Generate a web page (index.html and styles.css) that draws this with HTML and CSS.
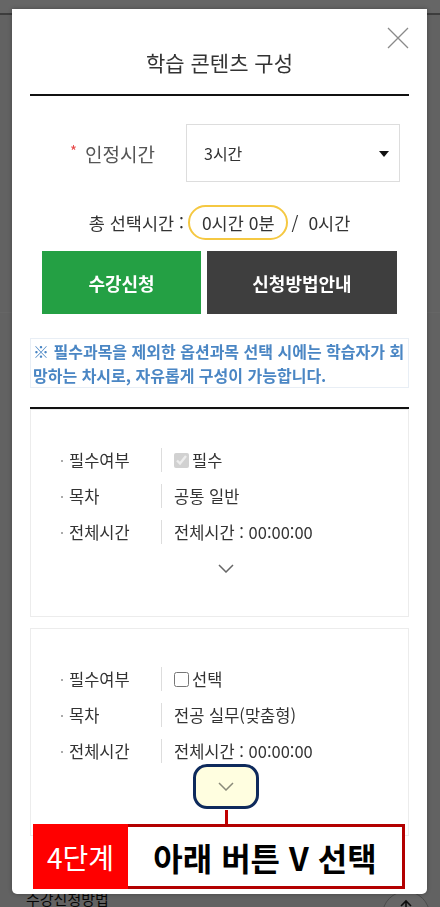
FILE: index.html
```html
<!DOCTYPE html>
<html lang="ko">
<head>
    <meta charset="UTF-8">
    <meta name="viewport" content="width=device-width, initial-scale=1.0">
    <title>학습 콘텐츠 구성</title>
    <link rel="stylesheet" href="styles.css">
</head>
<body>
    <div class="page">
        <div class="page-top"></div>
        <div class="page-section"></div>
        <div class="page-section last">
            <p class="page-text">수강신청방법</p>
        </div>
        <button class="to-top" type="button" aria-label="맨 위로">
            <svg viewBox="0 0 14 14" width="14" height="14"><path d="M7 13 V2 M2 7 L7 2 L12 7" stroke="#222" stroke-width="1.6" fill="none"/></svg>
        </button>
    </div>

    <div class="dim"></div>

    <div class="modal">
        <button class="close-btn" type="button" aria-label="닫기">
            <svg viewBox="0 0 22 22" width="22" height="22">
                <path d="M1 1 L21 21 M21 1 L1 21" stroke="#8a8a8a" stroke-width="1.3" fill="none"/>
            </svg>
        </button>

        <div class="modal-header">
            <h2>학습 콘텐츠 구성</h2>
        </div>

        <div class="form-row">
            <label class="form-label"><span class="req">*</span>인정시간</label>
            <div class="select">3시간</div>
        </div>

        <div class="summary">
            <span>총 선택시간 :</span>
            <span class="pill">0시간 0분</span>
            <span class="slash">/</span>
            <span>0시간</span>
        </div>

        <div class="btn-row">
            <button class="btn btn-green" type="button">수강신청</button>
            <button class="btn btn-dark" type="button">신청방법안내</button>
        </div>

        <div class="notice">
            ※ 필수과목을 제외한 옵션과목 선택 시에는 학습자가 회망하는 차시로, 자유롭게 구성이 가능합니다.
        </div>

        <div class="course-list">
            <div class="course-card">
                <div class="info-row">
                    <div class="info-label">필수여부</div>
                    <div class="info-value"><input type="checkbox" checked disabled> 필수</div>
                </div>
                <div class="info-row">
                    <div class="info-label">목차</div>
                    <div class="info-value">공통 일반</div>
                </div>
                <div class="info-row">
                    <div class="info-label">전체시간</div>
                    <div class="info-value">전체시간 : 00:00:00</div>
                </div>
                <div class="toggle-row">
                    <button class="toggle" type="button">
                        <svg viewBox="0 0 16 9" width="16" height="9"><path d="M1 1 L8 8 L15 1" stroke="#666" stroke-width="1.5" fill="none"/></svg>
                    </button>
                </div>
            </div>

            <div class="course-card">
                <div class="info-row">
                    <div class="info-label">필수여부</div>
                    <div class="info-value"><input type="checkbox"> 선택</div>
                </div>
                <div class="info-row">
                    <div class="info-label">목차</div>
                    <div class="info-value">전공 실무(맞춤형)</div>
                </div>
                <div class="info-row">
                    <div class="info-label">전체시간</div>
                    <div class="info-value">전체시간 : 00:00:00</div>
                </div>
                <div class="toggle-row">
                    <button class="toggle highlight" type="button">
                        <svg viewBox="0 0 16 9" width="16" height="9"><path d="M1 1 L8 8 L15 1" stroke="#8a8a7a" stroke-width="1.5" fill="none"/></svg>
                    </button>
                </div>
            </div>
        </div>

        <div class="guide-line"></div>
        <div class="guide">
            <div class="guide-step">4단계</div>
            <div class="guide-text">아래 버튼 V 선택</div>
        </div>
    </div>
</body>
</html>
```

FILE: styles.css
```css
* {
    margin: 0;
    padding: 0;
    box-sizing: border-box;
}

body {
    font-family: 'Noto Sans CJK KR', 'Noto Sans', sans-serif;
    color: #333;
    height: 907px;
    overflow: hidden;
}

button {
    font-family: inherit;
    border: none;
    background: none;
    cursor: pointer;
}

/* background page */
.page {
    height: 907px;
    display: flex;
    flex-direction: column;
    background: #f4f4f4;
}

.page-top {
    height: 15px;
    background: #fff;
    border-bottom: 2px solid #999;
}

.page-section {
    height: 298px;
    border-bottom: 1px solid #fff;
}

.page-section.last {
    flex: 1;
    border-bottom: none;
    display: flex;
    align-items: flex-end;
}

.page-text {
    padding-left: 26px;
    font-size: 15px;
    line-height: 15px;
    margin-bottom: 1px;
    color: #111;
}

.to-top {
    position: absolute;
    right: 10px;
    bottom: -32px;
    width: 48px;
    height: 48px;
    border-radius: 50%;
    border: 1px solid #bbb;
    background: #fff;
    display: flex;
    justify-content: center;
    padding-top: 7px;
}

.dim {
    position: fixed;
    inset: 0;
    background: rgba(0, 0, 0, 0.6);
}

/* modal */
.modal {
    position: fixed;
    top: 9px;
    left: 12px;
    width: 415px;
    height: 885px;
    background: #fff;
    border-radius: 0 0 5px 5px;
    padding: 0 18px;
    overflow: hidden;
    box-shadow: 0 0 4px rgba(0,0,0,0.3);
}

.close-btn {
    position: absolute;
    top: 18px;
    right: 18px;
    width: 22px;
    height: 22px;
    display: flex;
}

.modal-header {
    padding: 40px 0 19px;
    border-bottom: 2px solid #111;
    text-align: center;
}

.modal-header h2 {
    font-size: 21px;
    line-height: 26px;
    font-weight: 400;
    color: #333;
}

.form-row {
    margin-top: 28px;
    height: 58px;
    display: flex;
    align-items: center;
    padding: 0 9px 0 40px;
}

.form-label {
    font-size: 19px;
    color: #555;
    display: flex;
    align-items: center;
}

.req {
    color: #e84a4a;
    font-size: 15px;
    margin-right: 8px;
    position: relative;
    top: -3px;
}

.select {
    margin-left: auto;
    width: 214px;
    height: 58px;
    border: 1px solid #ddd;
    padding-left: 17px;
    font-size: 16px;
    display: flex;
    align-items: center;
    position: relative;
}

.select::after {
    content: '';
    position: absolute;
    right: 10px;
    top: 26px;
    border-left: 5.5px solid transparent;
    border-right: 5.5px solid transparent;
    border-top: 6px solid #111;
}

.summary {
    margin-top: 23px;
    display: flex;
    justify-content: center;
    align-items: center;
    font-size: 17.5px;
    color: #333;
    gap: 4px;
}

.pill {
    height: 35px;
    padding: 0 11px 0 12px;
    border: 2px solid #f5c842;
    border-radius: 18px;
    display: flex;
    align-items: center;
}

.slash {
    margin-right: 6px;
}

.btn-row {
    margin-top: 11px;
    padding: 0 12px;
    display: grid;
    grid-template-columns: 159fr 190fr;
    gap: 6px;
}

.btn {
    height: 63px;
    font-size: 18px;
    font-weight: 700;
    color: #fff;
}

.btn-green {
    background: #24a044;
}

.btn-dark {
    background: #3e3e3e;
}

.notice {
    margin-top: 24px;
    border: 1px solid #e8eef5;
    padding: 0 2px;
    font-size: 16px;
    line-height: 24px;
    font-weight: 700;
    color: #4a86c4;
}

.course-list {
    margin-top: 19px;
    border-top: 2px solid #111;
}

.course-card {
    border: 1px solid #ececec;
    padding: 32px 30px 30px;
}

.course-card + .course-card {
    margin-top: 11px;
}

.info-row {
    height: 36px;
    display: flex;
    align-items: center;
    font-size: 16.5px;
    color: #333;
}

.info-label {
    width: 101px;
    height: 24px;
    display: flex;
    align-items: center;
    padding-left: 8px;
    position: relative;
    border-right: 1px solid #ddd;
}

.info-label::before {
    content: '';
    position: absolute;
    left: 0;
    top: 12px;
    width: 2px;
    height: 2px;
    background: #aaa;
}

.info-value {
    padding-left: 12px;
    display: flex;
    align-items: center;
    gap: 3px;
}

.info-value input {
    width: 15px;
    height: 15px;
    margin: 0;
}

.toggle-row {
    height: 36px;
    display: flex;
    justify-content: center;
    align-items: center;
    padding-left: 12px;
}

.toggle {
    width: 20px;
    height: 20px;
    display: flex;
    align-items: center;
    justify-content: center;
}

.toggle.highlight {
    width: 66px;
    height: 45px;
    margin: -5px 0 -4px;
    border: 3px solid #0e2a5c;
    border-radius: 14px;
    background: #fffee0;
}

/* guide annotation */
.guide-line {
    position: absolute;
    left: 213px;
    top: 801px;
    width: 3px;
    height: 16px;
    background: #c00000;
}

.guide {
    position: absolute;
    left: 21px;
    top: 815px;
    width: 372px;
    height: 65px;
    border: 3px solid #b30000;
    display: flex;
    background: #fff;
}

.guide-step {
    width: 95px;
    margin: -3px 0 -3px -3px;
    background: #ff0000;
    color: #fff;
    font-size: 28px;
    display: flex;
    align-items: center;
    justify-content: center;
}

.guide-text {
    flex: 1;
    display: flex;
    align-items: center;
    justify-content: center;
    font-size: 32px;
    font-weight: 700;
    color: #000;
}
```
